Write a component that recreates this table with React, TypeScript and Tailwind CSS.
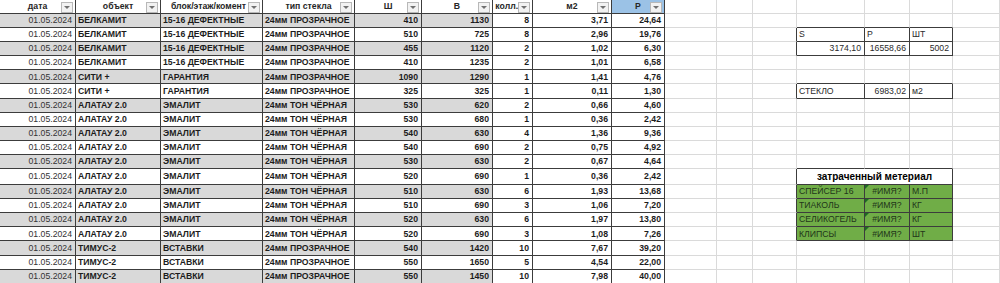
type Row = [string, string, string, string, string, string, string, string, string];

const HEAD = ['дата', 'объект', 'блок/этаж/комент', 'тип стекла', 'Ш', 'В', 'колл.шт', 'м2', 'Р'];

const ROWS: Row[] = [
  ['01.05.2024', 'БЕЛКАМИТ', '15-16 ДЕФЕКТНЫЕ', '24мм ПРОЗРАЧНОЕ', '410', '1130', '8', '3,71', '24,64'],
  ['01.05.2024', 'БЕЛКАМИТ', '15-16 ДЕФЕКТНЫЕ', '24мм ПРОЗРАЧНОЕ', '510', '725', '8', '2,96', '19,76'],
  ['01.05.2024', 'БЕЛКАМИТ', '15-16 ДЕФЕКТНЫЕ', '24мм ПРОЗРАЧНОЕ', '455', '1120', '2', '1,02', '6,30'],
  ['01.05.2024', 'БЕЛКАМИТ', '15-16 ДЕФЕКТНЫЕ', '24мм ПРОЗРАЧНОЕ', '410', '1235', '2', '1,01', '6,58'],
  ['01.05.2024', 'СИТИ +', 'ГАРАНТИЯ', '24мм ПРОЗРАЧНОЕ', '1090', '1290', '1', '1,41', '4,76'],
  ['01.05.2024', 'СИТИ +', 'ГАРАНТИЯ', '24мм ПРОЗРАЧНОЕ', '325', '325', '1', '0,11', '1,30'],
  ['01.05.2024', 'АЛАТАУ 2.0', 'ЭМАЛИТ', '24мм ТОН ЧЁРНАЯ', '530', '620', '2', '0,66', '4,60'],
  ['01.05.2024', 'АЛАТАУ 2.0', 'ЭМАЛИТ', '24мм ТОН ЧЁРНАЯ', '530', '680', '1', '0,36', '2,42'],
  ['01.05.2024', 'АЛАТАУ 2.0', 'ЭМАЛИТ', '24мм ТОН ЧЁРНАЯ', '540', '630', '4', '1,36', '9,36'],
  ['01.05.2024', 'АЛАТАУ 2.0', 'ЭМАЛИТ', '24мм ТОН ЧЁРНАЯ', '540', '690', '2', '0,75', '4,92'],
  ['01.05.2024', 'АЛАТАУ 2.0', 'ЭМАЛИТ', '24мм ТОН ЧЁРНАЯ', '530', '630', '2', '0,67', '4,64'],
  ['01.05.2024', 'АЛАТАУ 2.0', 'ЭМАЛИТ', '24мм ТОН ЧЁРНАЯ', '520', '690', '1', '0,36', '2,42'],
  ['01.05.2024', 'АЛАТАУ 2.0', 'ЭМАЛИТ', '24мм ТОН ЧЁРНАЯ', '510', '630', '6', '1,93', '13,68'],
  ['01.05.2024', 'АЛАТАУ 2.0', 'ЭМАЛИТ', '24мм ТОН ЧЁРНАЯ', '510', '690', '3', '1,06', '7,20'],
  ['01.05.2024', 'АЛАТАУ 2.0', 'ЭМАЛИТ', '24мм ТОН ЧЁРНАЯ', '520', '630', '6', '1,97', '13,80'],
  ['01.05.2024', 'АЛАТАУ 2.0', 'ЭМАЛИТ', '24мм ТОН ЧЁРНАЯ', '520', '690', '3', '1,08', '7,26'],
  ['01.05.2024', 'ТИМУС-2', 'ВСТАВКИ', '24мм ПРОЗРАЧНОЕ', '540', '1420', '10', '7,67', '39,20'],
  ['01.05.2024', 'ТИМУС-2', 'ВСТАВКИ', '24мм ПРОЗРАЧНОЕ', '550', '1650', '5', '4,54', '22,00'],
  ['01.05.2024', 'ТИМУС-2', 'ВСТАВКИ', '24мм ПРОЗРАЧНОЕ', '550', '1450', '10', '7,98', '40,00'],
];

// side panel cells: [row, col] -> text + alignment
const SIDE: Record<string, { t: string; a: 'l' | 'r' | 'c' }> = {
  '2-12': { t: 'S', a: 'l' },
  '2-13': { t: 'Р', a: 'l' },
  '2-14': { t: 'ШТ', a: 'l' },
  '3-12': { t: '3174,10', a: 'r' },
  '3-13': { t: '16558,66', a: 'r' },
  '3-14': { t: '5002', a: 'r' },
  '6-12': { t: 'СТЕКЛО', a: 'l' },
  '6-13': { t: '6983,02', a: 'r' },
  '6-14': { t: 'м2', a: 'l' },
};

const MATERIALS = [
  ['СПЕЙСЕР 16', 'М.П'],
  ['ТИАКОЛЬ', 'КГ'],
  ['СЕЛИКОГЕЛЬ', 'КГ'],
  ['КЛИПСЫ', 'ШТ'],
];

const boxed = (r: number, c: number) =>
  (c <= 8 && r <= 19) ||
  (c >= 12 && c <= 14 && (r === 2 || r === 3 || r === 6 || (r >= 12 && r <= 16)));

function FilterButton() {
  return (
    <span className="absolute right-[2px] top-[1.5px] flex h-[11px] w-[12px] items-center justify-center border border-[#b8b8b8] bg-[#f2f2f2]">
      <span className="h-0 w-0 border-l-[3px] border-r-[3px] border-t-[3.5px] border-l-transparent border-r-transparent border-t-[#707070]" />
    </span>
  );
}

export default function App() {
  const cells: React.ReactNode[] = [];

  for (let r = 0; r < 20; r++) {
    for (let c = 0; c < 16; c++) {
      // merged title cell spans cols 12-14
      if (r === 12 && (c === 13 || c === 14)) continue;

      const lastCol = r === 12 && c === 12 ? 14 : c;
      const rb = boxed(r, lastCol) || boxed(r, lastCol + 1) ? 'border-r-[#3c3c3c]' : 'border-r-[#dadada]';
      const bb = boxed(r, c) || boxed(r + 1, c) ? 'border-b-[#3c3c3c]' : 'border-b-[#dadada]';
      const base = `relative flex items-center overflow-hidden whitespace-nowrap border-r border-b ${rb} ${bb}`;
      const key = `${r}-${c}`;

      // header row
      if (r === 0 && c <= 8) {
        cells.push(
          <div key={key} className={`${base} justify-center font-bold text-[#262626] ${c === 8 ? 'bg-[#9bc2e6]' : 'bg-white'}`}>
            <span className={c === 2 ? 'pr-[6px]' : ''}>{HEAD[c]}</span>
            <FilterButton />
          </div>,
        );
        continue;
      }

      // data rows
      if (r >= 1 && c <= 8) {
        const v = ROWS[r - 1][c];
        const gray = r % 2 === 1 && c <= 5 ? 'bg-[#d9d9d9]' : 'bg-white';
        const cls =
          c === 0
            ? 'justify-end pr-[3px] text-[#333]'
            : c <= 3
              ? 'justify-start pl-[2px] font-bold text-[#1c1c1c]'
              : 'justify-end pr-[3px] font-bold text-[#1c1c1c]';
        cells.push(
          <div key={key} className={`${base} ${gray} ${cls}`}>
            {v}
          </div>,
        );
        continue;
      }

      // materials block
      if (r === 12 && c === 12) {
        cells.push(
          <div key={key} className={`${base} col-span-3 justify-center bg-white text-[10px] font-bold text-black`}>
            затраченный метериал
          </div>,
        );
        continue;
      }
      if (r >= 13 && r <= 16 && c >= 12 && c <= 14) {
        const m = MATERIALS[r - 13];
        if (c === 13) {
          cells.push(
            <div key={key} className={`${base} justify-center bg-[#70ad47] text-[#22361a]`}>
              <span className="absolute left-0 top-0 h-0 w-0 border-r-[4px] border-t-[4px] border-r-transparent border-t-[#1d6b22]" />
              #ИМЯ?
            </div>,
          );
        } else {
          cells.push(
            <div key={key} className={`${base} justify-start bg-[#70ad47] pl-[2px] text-[#22361a]`}>
              {c === 12 ? m[0] : m[1]}
            </div>,
          );
        }
        continue;
      }

      const s = SIDE[key];
      cells.push(
        <div
          key={key}
          className={`${base} bg-white text-[#2b2b2b] ${s?.a === 'r' ? 'justify-end pr-[3px]' : 'justify-start pl-[2px]'}`}
        >
          {s?.t}
        </div>,
      );
    }
  }

  return (
    <div className="h-[283px] w-[1000px] overflow-hidden bg-white font-['Liberation_Sans',Arial,sans-serif] text-[8.7px] leading-none">
      <div className="grid grid-cols-[76px_85px_102px_92px_67px_71px_40px_79px_53px_52px_36px_44px_68px_45px_43px_47px] grid-rows-[14px_repeat(11,14.1px)_16px_repeat(7,14.1px)]">
        {cells}
      </div>
    </div>
  );
}
